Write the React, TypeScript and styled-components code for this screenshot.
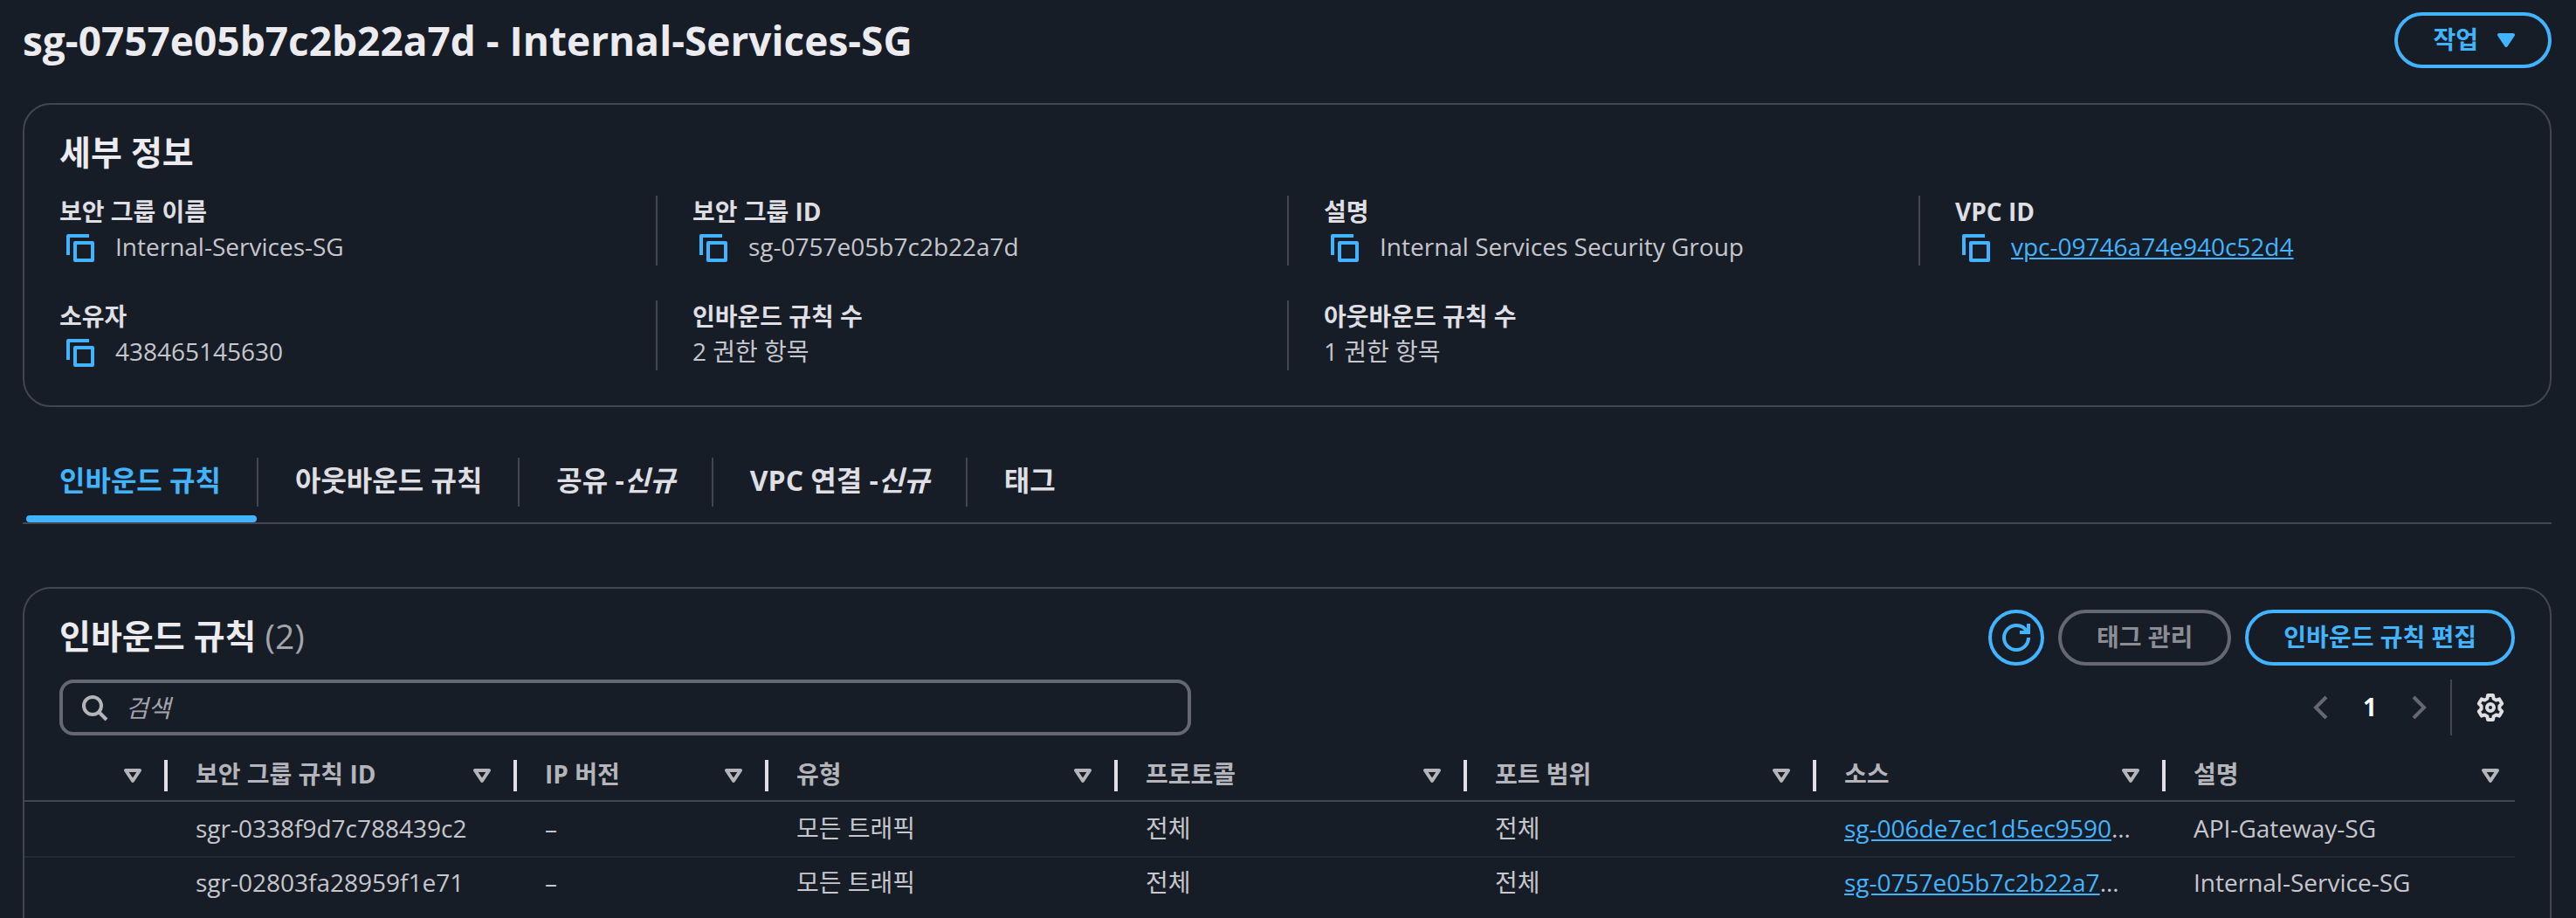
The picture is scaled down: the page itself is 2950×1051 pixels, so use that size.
import React from "react";
import styled, { createGlobalStyle, css } from "styled-components";

const color = {
  page: "#161d26",
  line: "#424650",
  rowLine: "#232b37",
  control: "#656871",
  heading: "#ebebf0",
  label: "#dedee3",
  text: "#c6c6cd",
  column: "#b4b4bb",
  muted: "#a4a4ad",
  disabled: "#8c8c94",
  accent: "#42b4ff",
};

const GlobalStyle = createGlobalStyle`
  *, *::before, *::after { box-sizing: border-box; }
  body {
    margin: 0;
    background: ${color.page};
    color: ${color.text};
    font-family: "Open Sans", "Noto Sans CJK KR", sans-serif;
    font-size: 28px;
    line-height: 40px;
  }
  h1, h2, dl, dd { margin: 0; }
  button, input { font: inherit; color: inherit; }
`;

const Page = styled.main`
  display: flex;
  flex-direction: column;
  min-height: 100vh;
  padding: 14px 28px 0 26px;
`;

const PageHeader = styled.header`
  display: flex;
  align-items: center;
  justify-content: space-between;
  margin-bottom: 40px;
`;

const PageTitle = styled.h1`
  font-size: 46px;
  line-height: 60px;
  font-weight: 700;
  color: ${color.heading};
`;

const PillButton = styled.button`
  display: flex;
  align-items: center;
  gap: 16px;
  height: 64px;
  padding: 0 40px;
  border: 4px solid ${color.accent};
  border-radius: 40px;
  background: transparent;
  color: ${color.accent};
  font-weight: 700;
  white-space: nowrap;
  cursor: pointer;
  &:disabled {
    border-color: ${color.control};
    color: ${color.disabled};
    cursor: default;
  }
`;

const ButtonLabel = styled.span`
  padding-bottom: 2px;
`;

const MenuButton = styled(PillButton)`
  padding-right: 32px;
`;

const RoundButton = styled(PillButton)`
  justify-content: center;
  width: 64px;
  padding: 0;
`;

const PlainButton = styled.button`
  display: flex;
  align-items: center;
  justify-content: center;
  padding: 0;
  border: 0;
  background: none;
  color: ${color.label};
  cursor: pointer;
  &:disabled {
    color: ${color.control};
    cursor: default;
  }
`;

const CopyButton = styled(PlainButton)`
  height: 40px;
  padding: 0 24px 0 8px;
  color: ${color.accent};
`;

const IconSvg = styled.svg<{ $filled?: boolean }>`
  display: block;
  flex: none;
  width: 32px;
  height: 32px;
  fill: ${(p) => (p.$filled ? "currentColor" : "none")};
  stroke: currentColor;
  stroke-width: 2;
`;

const panel = css`
  border: 2px solid ${color.line};
  border-radius: 32px;
`;

const DetailsPanel = styled.section`
  ${panel}
  padding: 32px 0 40px;
`;

const PanelTitle = styled.h2`
  padding-bottom: 4px;
  font-size: 39px;
  line-height: 44px;
  font-weight: 700;
  color: ${color.heading};
`;

const DetailsHeader = styled.div`
  padding: 0 40px;
  margin-bottom: 24px;
`;

const DetailsGrid = styled.dl`
  display: grid;
  grid-template-columns: repeat(4, 1fr);
  row-gap: 40px;
`;

const Detail = styled.div`
  padding: 0 40px;
  line-height: 36px;
  &:not(:nth-child(4n + 1)) {
    border-left: 2px solid ${color.line};
  }
`;

const DetailLabel = styled.dt`
  height: 40px;
  font-weight: 700;
  color: ${color.label};
`;

const DetailValue = styled.dd`
  display: flex;
  align-items: flex-start;
  height: 40px;
`;

const Link = styled.a`
  color: ${color.accent};
  text-decoration: underline;
`;

const TabList = styled.div`
  display: flex;
  height: 96px;
  margin-top: 38px;
  border-bottom: 2px solid ${color.line};
`;

const Tab = styled.button<{ $active?: boolean }>`
  display: flex;
  flex-direction: column;
  padding: 20px 0 0;
  border: 0;
  background: none;
  font-size: 32px;
  font-weight: 700;
  white-space: nowrap;
  cursor: pointer;
  color: ${(p) => (p.$active ? color.accent : color.label)};
  &::after {
    content: "";
    align-self: stretch;
    height: 8px;
    margin: 10px 2px 0 4px;
    border-radius: 4px;
    background: ${(p) => (p.$active ? color.accent : "transparent")};
  }
  &:not(:last-child) > span {
    border-right: 2px solid ${color.line};
  }
`;

const TabLabel = styled.span`
  display: block;
  height: 56px;
  padding: 0 41px 0 42px;
  line-height: 52px;
`;

const RulesPanel = styled.section`
  ${panel}
  flex: 1;
  margin-top: 72px;
  padding-top: 24px;
  border-bottom: 0;
  border-radius: 32px 32px 0 0;
`;

const RulesHeader = styled.div`
  display: flex;
  align-items: center;
  justify-content: space-between;
  padding: 0 40px;
`;

const Counter = styled.span`
  font-weight: 400;
  color: ${color.muted};
`;

const Actions = styled.div`
  display: flex;
  gap: 16px;
`;

const Tools = styled.div`
  display: flex;
  align-items: center;
  justify-content: space-between;
  margin-top: 16px;
  padding: 0 40px;
`;

const SearchBox = styled.label`
  display: flex;
  align-items: center;
  gap: 20px;
  width: 100%;
  max-width: 1296px;
  height: 64px;
  padding: 0 20px;
  border: 4px solid ${color.control};
  border-radius: 16px;
  color: ${color.column};
`;

const SearchInput = styled.input`
  flex: 1;
  min-width: 0;
  padding: 0;
  border: 0;
  outline: 0;
  background: none;
  &::placeholder {
    color: ${color.muted};
    font-style: italic;
    opacity: 1;
  }
`;

const Pager = styled.nav`
  display: flex;
  align-items: center;
  height: 64px;
`;

const PageNumber = styled(PlainButton)`
  width: 80px;
  padding-bottom: 2px;
  color: #ffffff;
  font-weight: 700;
`;

const SettingsSlot = styled.div`
  display: flex;
  align-items: center;
  height: 64px;
  margin-left: 20px;
  padding: 0 12px 0 28px;
  border-left: 2px solid ${color.line};
`;

const TableWrap = styled.div`
  margin-top: 12px;
  padding-right: 40px;
`;

const Table = styled.table`
  width: 100%;
  table-layout: fixed;
  border-collapse: separate;
  border-spacing: 0;
`;

const HeadCell = styled.th`
  padding: 16px 0 10px;
  border-bottom: 2px solid ${color.line};
  color: ${color.column};
  font-weight: 700;
  text-align: left;
`;

const HeadContent = styled.div`
  display: flex;
  align-items: flex-start;
  justify-content: space-between;
  height: 36px;
  padding: 0 20px 0 32px;
  border-right: 4px solid ${color.label};
  line-height: 32px;
  th:last-child > & {
    padding-right: 12px;
    border-right: 0;
  }
`;

const SortButton = styled(PlainButton)`
  height: 36px;
  margin-left: auto;
  color: ${color.column};
`;

const Cell = styled.td`
  height: 60px;
  padding: 8px 32px 12px;
  vertical-align: top;
  white-space: nowrap;
  overflow: hidden;
  tr:first-child > & {
    height: 64px;
    padding: 10px 32px 12px;
    border-bottom: 2px solid ${color.rowLine};
  }
`;

const CopyIcon = () => (
  <IconSvg viewBox="0 0 16 16" aria-hidden="true">
    <path d="M15 5H5v10h10V5Z" strokeLinejoin="round" />
    <path d="M13 1H1v11" strokeLinejoin="round" />
  </IconSvg>
);

const CaretIcon = ({ filled }: { filled?: boolean }) => (
  <IconSvg viewBox="0 0 16 16" $filled={filled} aria-hidden="true">
    <path d="M4 5h8l-4 6-4-6Z" strokeLinejoin="round" />
  </IconSvg>
);

const RefreshIcon = () => (
  <IconSvg viewBox="0 0 16 16" aria-hidden="true">
    <path d="M15 8c0 3.87-3.13 7-7 7s-7-3.13-7-7 3.13-7 7-7c2.79 0 5.2 1.63 6.33 4" />
    <path d="M10 5h5V0" />
  </IconSvg>
);

const SearchIcon = () => (
  <IconSvg viewBox="0 0 16 16" aria-hidden="true">
    <circle cx="7" cy="7" r="5" />
    <path d="m15 15-4.5-4.5" />
  </IconSvg>
);

const AngleIcon = ({ right }: { right?: boolean }) => (
  <IconSvg viewBox="0 0 16 16" aria-hidden="true">
    <path d={right ? "m5 2 6 6-6 6" : "M11 2 5 8l6 6"} />
  </IconSvg>
);

const GearIcon = () => (
  <IconSvg viewBox="0 0 16 16" aria-hidden="true">
    <path
      d="M6.5 1h3l.3 1.900 1.500.9 1.800-.6 1.500 2.600-1.400 1.300v1.800l1.400 1.300-1.500 2.600-1.800-.6-1.500.9-.3 1.900h-3l-.3-1.900-1.500-.9-1.800.6-1.500-2.600 1.400-1.300V7.100L1.400 5.800l1.500-2.600 1.800.6 1.500-.9L6.500 1Z"
      strokeLinejoin="round"
    />
    <circle cx="8" cy="8" r="2" />
  </IconSvg>
);

type DetailItem = { label: string; value: string; copy?: boolean; link?: boolean };

const details: DetailItem[] = [
  { label: "보안 그룹 이름", value: "Internal-Services-SG", copy: true },
  { label: "보안 그룹 ID", value: "sg-0757e05b7c2b22a7d", copy: true },
  { label: "설명", value: "Internal Services Security Group", copy: true },
  { label: "VPC ID", value: "vpc-09746a74e940c52d4", copy: true, link: true },
  { label: "소유자", value: "438465145630", copy: true },
  { label: "인바운드 규칙 수", value: "2 권한 항목" },
  { label: "아웃바운드 규칙 수", value: "1 권한 항목" },
];

const tabs: { label: string; note?: string }[] = [
  { label: "인바운드 규칙" },
  { label: "아웃바운드 규칙" },
  { label: "공유 -", note: "신규" },
  { label: "VPC 연결 -", note: "신규" },
  { label: "태그" },
];

const columns: { label: string; width?: number }[] = [
  { label: "", width: 164 },
  { label: "보안 그룹 규칙 ID" },
  { label: "IP 버전", width: 288 },
  { label: "유형" },
  { label: "프로토콜" },
  { label: "포트 범위" },
  { label: "소스" },
  { label: "설명" },
];

const rules = [
  { id: "sgr-0338f9d7c788439c2", source: "sg-006de7ec1d5ec9590", note: "API-Gateway-SG" },
  { id: "sgr-02803fa28959f1e71", source: "sg-0757e05b7c2b22a7", note: "Internal-Service-SG" },
];

export default function App() {
  const [active, setActive] = React.useState(0);

  return (
    <>
      <GlobalStyle />
      <Page>
        <PageHeader>
          <PageTitle>sg-0757e05b7c2b22a7d - Internal-Services-SG</PageTitle>
          <MenuButton type="button">
            <ButtonLabel>작업</ButtonLabel>
            <CaretIcon filled />
          </MenuButton>
        </PageHeader>

        <DetailsPanel>
          <DetailsHeader>
            <PanelTitle>세부 정보</PanelTitle>
          </DetailsHeader>
          <DetailsGrid>
            {details.map((item) => (
              <Detail key={item.label}>
                <DetailLabel>{item.label}</DetailLabel>
                <DetailValue>
                  {item.copy && (
                    <CopyButton type="button">
                      <CopyIcon />
                    </CopyButton>
                  )}
                  {item.link ? <Link href="#vpc">{item.value}</Link> : item.value}
                </DetailValue>
              </Detail>
            ))}
          </DetailsGrid>
        </DetailsPanel>

        <TabList role="tablist">
          {tabs.map((tab, i) => (
            <Tab
              key={tab.label}
              type="button"
              role="tab"
              aria-selected={i === active}
              $active={i === active}
              onClick={() => setActive(i)}
            >
              <TabLabel>
                {tab.label}
                {tab.note && <i>{tab.note}</i>}
              </TabLabel>
            </Tab>
          ))}
        </TabList>

        <RulesPanel>
          <RulesHeader>
            <PanelTitle>
              인바운드 규칙 <Counter>(2)</Counter>
            </PanelTitle>
            <Actions>
              <RoundButton type="button">
                <RefreshIcon />
              </RoundButton>
              <PillButton type="button" disabled>
                <ButtonLabel>태그 관리</ButtonLabel>
              </PillButton>
              <PillButton type="button">
                <ButtonLabel>인바운드 규칙 편집</ButtonLabel>
              </PillButton>
            </Actions>
          </RulesHeader>

          <Tools>
            <SearchBox>
              <SearchIcon />
              <SearchInput type="text" placeholder="검색" />
            </SearchBox>
            <Pager>
              <PlainButton type="button" disabled>
                <AngleIcon />
              </PlainButton>
              <PageNumber type="button">1</PageNumber>
              <PlainButton type="button" disabled>
                <AngleIcon right />
              </PlainButton>
              <SettingsSlot>
                <PlainButton type="button">
                  <GearIcon />
                </PlainButton>
              </SettingsSlot>
            </Pager>
          </Tools>

          <TableWrap>
            <Table>
              <colgroup>
                {columns.map((column, i) => (
                  <col key={i} width={column.width} />
                ))}
              </colgroup>
              <thead>
                <tr>
                  {columns.map((column, i) => (
                    <HeadCell key={i} scope="col">
                      <HeadContent>
                        {column.label}
                        <SortButton type="button">
                          <CaretIcon />
                        </SortButton>
                      </HeadContent>
                    </HeadCell>
                  ))}
                </tr>
              </thead>
              <tbody>
                {rules.map((rule) => (
                  <tr key={rule.id}>
                    <Cell />
                    <Cell>{rule.id}</Cell>
                    <Cell>–</Cell>
                    <Cell>모든 트래픽</Cell>
                    <Cell>전체</Cell>
                    <Cell>전체</Cell>
                    <Cell>
                      <Link href="#source">{rule.source}</Link>…
                    </Cell>
                    <Cell>{rule.note}</Cell>
                  </tr>
                ))}
              </tbody>
            </Table>
          </TableWrap>
        </RulesPanel>
      </Page>
    </>
  );
}
